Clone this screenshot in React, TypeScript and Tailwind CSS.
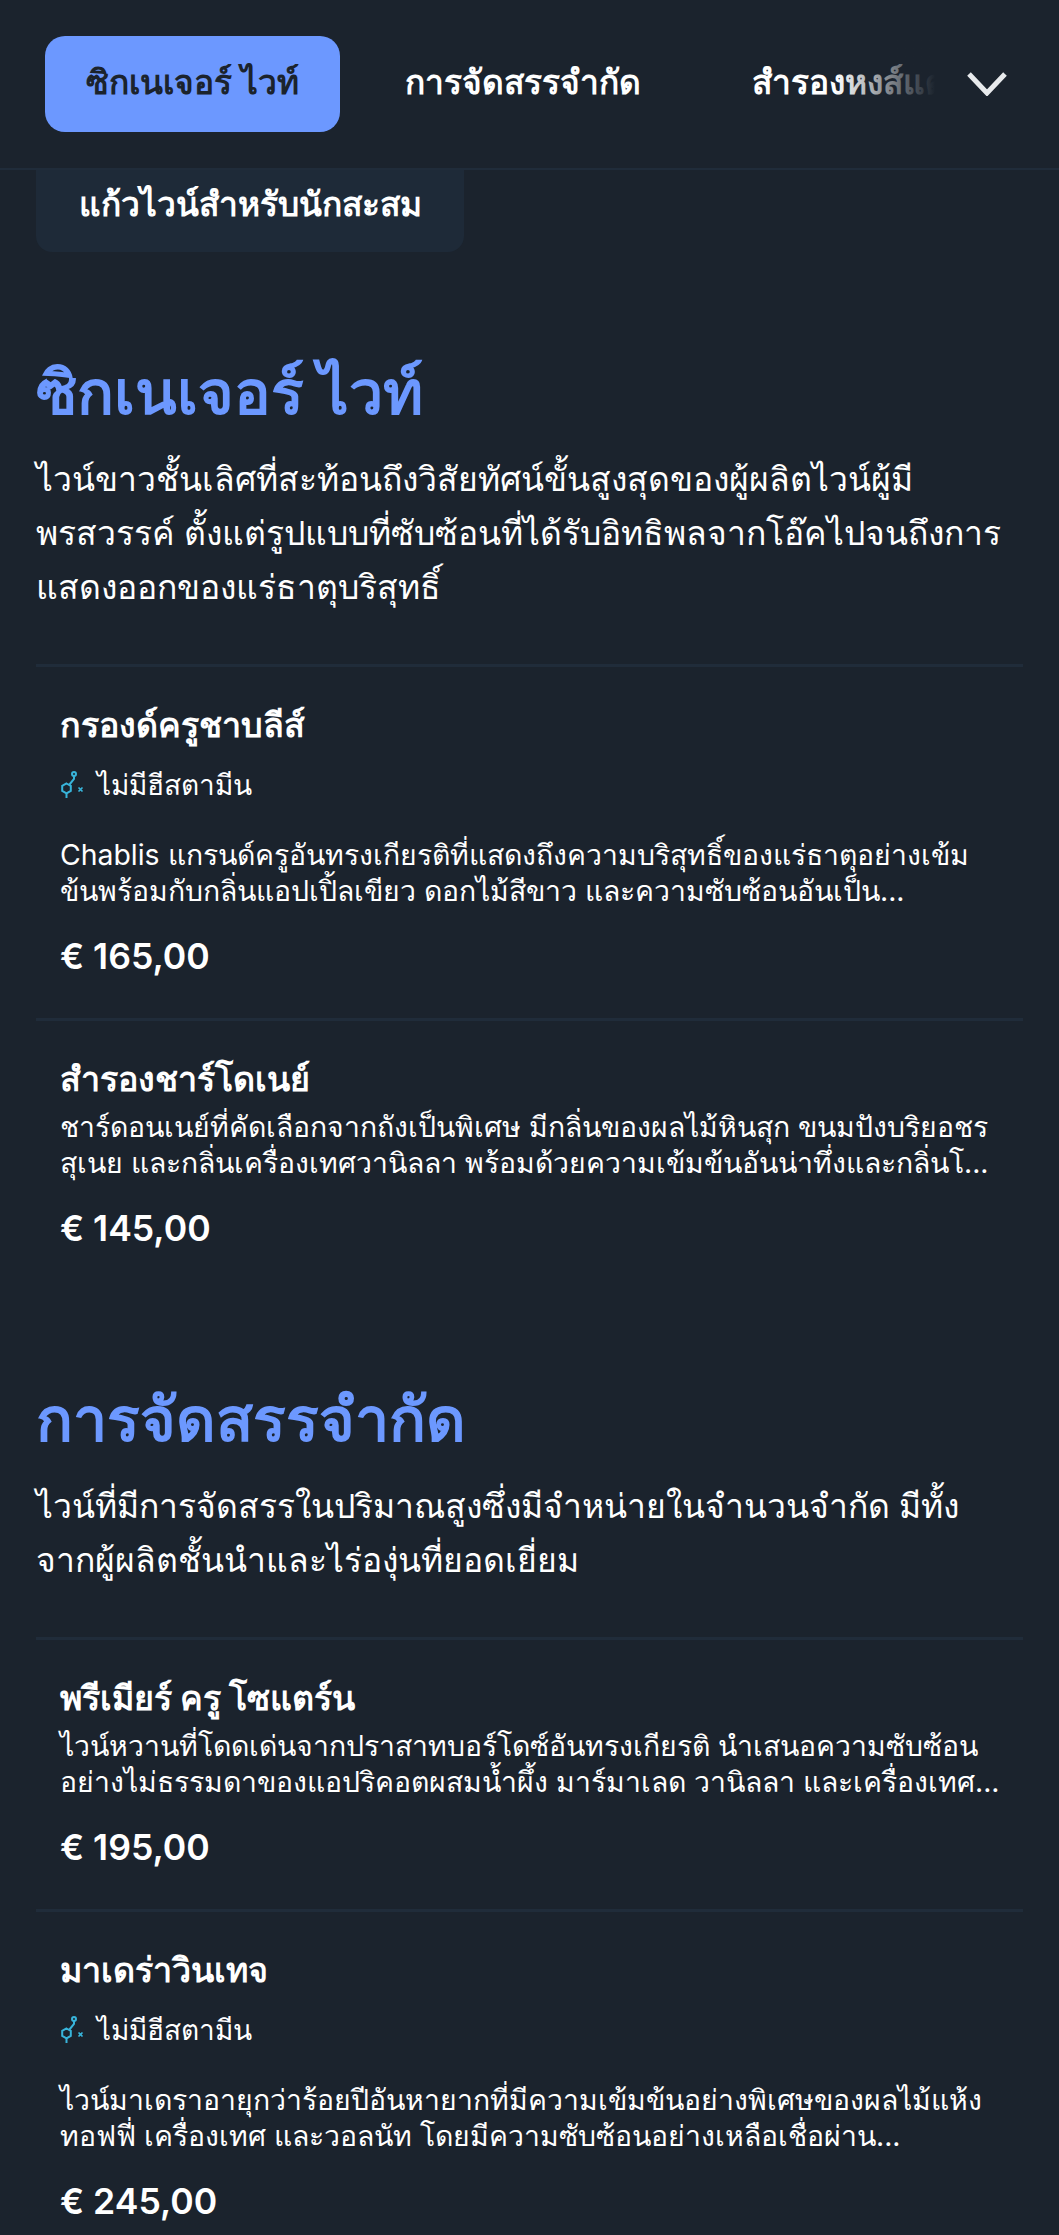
import React from 'react';

type Wine = {
  name: string;
  noHistamine?: boolean;
  lines: string[];
  price: string;
};

const signature: Wine[] = [
  {
    name: 'กรองด์ครูชาบลีส์',
    noHistamine: true,
    lines: [
      'Chablis แกรนด์ครูอันทรงเกียรติที่แสดงถึงความบริสุทธิ์ของแร่ธาตุอย่างเข้ม',
      'ข้นพร้อมกับกลิ่นแอปเปิ้ลเขียว ดอกไม้สีขาว และความซับซ้อนอันเป็น...',
    ],
    price: '€ 165,00',
  },
  {
    name: 'สำรองชาร์โดเนย์',
    lines: [
      'ชาร์ดอนเนย์ที่คัดเลือกจากถังเป็นพิเศษ มีกลิ่นของผลไม้หินสุก ขนมปังบริยอชร',
      'สุเนย และกลิ่นเครื่องเทศวานิลลา พร้อมด้วยความเข้มข้นอันน่าทึ่งและกลิ่นโ...',
    ],
    price: '€ 145,00',
  },
];

const limited: Wine[] = [
  {
    name: 'พรีเมียร์ ครู โซแตร์น',
    lines: [
      'ไวน์หวานที่โดดเด่นจากปราสาทบอร์โดซ์อันทรงเกียรติ นำเสนอความซับซ้อน',
      'อย่างไม่ธรรมดาของแอปริคอตผสมน้ำผึ้ง มาร์มาเลด วานิลลา และเครื่องเทศ...',
    ],
    price: '€ 195,00',
  },
  {
    name: 'มาเดร่าวินเทจ',
    noHistamine: true,
    lines: [
      'ไวน์มาเดราอายุกว่าร้อยปีอันหายากที่มีความเข้มข้นอย่างพิเศษของผลไม้แห้ง',
      'ทอฟฟี่ เครื่องเทศ และวอลนัท โดยมีความซับซ้อนอย่างเหลือเชื่อผ่าน...',
    ],
    price: '€ 245,00',
  },
];

function MoleculeIcon() {
  return (
    <svg width="24" height="28" viewBox="0 0 24 28" fill="none" stroke="#38b4da" strokeWidth="2">
      <path d="M6.5 12.5l4.3 2.4v5l-4.3 2.4-4.3-2.4v-5z" />
      <path d="M6.5 22.3V27M9.5 13.5l4.5-5.5V5" />
      <circle cx="14" cy="3" r="2" />
      <path d="M18.5 16.5l4 4M22.5 16.5l-4 4" strokeWidth="1.7" />
    </svg>
  );
}

function WineItem({ wine }: { wine: Wine }) {
  return (
    <div className="border-t-[3px] border-[#202c3a] pl-6 pb-[39px] pt-[36px] last:pb-0">
      <h3 className="text-[34px] leading-[44px] font-bold">{wine.name}</h3>
      {wine.noHistamine ? (
        <div className="mt-[16px] mb-[30px] flex items-center gap-[13px] text-[28px] leading-[44px]">
          <MoleculeIcon />
          <span>ไม่มีฮีสตามีน</span>
        </div>
      ) : (
        <div className="h-[8px]" />
      )}
      <div className="text-[28.4px] leading-[36px]">
        {wine.lines.map((line) => (
          <p key={line} className="whitespace-nowrap">
            {line}
          </p>
        ))}
      </div>
      <p className="mt-[26px] text-[35.6px] leading-[44px] font-semibold">{wine.price}</p>
    </div>
  );
}

function Section({ title, text, wines }: { title: string; text: string[]; wines: Wine[] }) {
  return (
    <section>
      <h2 className="text-[61px] leading-[80px] font-bold text-[#6c98ff]">{title}</h2>
      <div className="mt-[20px] mb-[50px] text-[33.7px] leading-[54px]">
        {text.map((line) => (
          <p key={line} className="whitespace-nowrap">
            {line}
          </p>
        ))}
      </div>
      {wines.map((wine) => (
        <WineItem key={wine.name} wine={wine} />
      ))}
    </section>
  );
}

export default function App() {
  return (
    <div className="min-h-[2235px] w-[1059px] overflow-hidden bg-[#1b232d] text-white font-['Inter','Noto_Sans',sans-serif]">
      <header className="flex h-[170px] items-center border-b-2 border-[#202c3a] pl-[45px] pr-[52px]">
        <div className="relative flex flex-1 items-center gap-[65px] overflow-hidden text-[33.5px] font-semibold">
          <div className="flex h-[96px] w-[295px] shrink-0 items-center justify-center rounded-[20px] bg-[#6c98ff] pb-[3px] text-[#1b232d]">
            ซิกเนเจอร์ ไวท์
          </div>
          <div className="shrink-0 pb-[3px]">การจัดสรรจำกัด</div>
          <div className="shrink-0 pb-[3px] pl-[46px]">สำรองหงส์แดง</div>
          <div className="absolute inset-y-0 right-0 w-[100px] bg-gradient-to-r from-transparent to-[#1b232d]" />
        </div>
        <svg width="40" height="24" viewBox="0 0 40 24" fill="none" stroke="#e8eaec" strokeWidth="5" className="ml-[32px] shrink-0">
          <path d="M2 2l18 19L38 2" />
        </svg>
      </header>

      <div className="px-[36px]">
        <div className="flex h-[82px] w-[428px] items-start justify-center rounded-b-2xl bg-[#1e2a38] pt-[12px] text-[33.5px] leading-[44px] font-semibold">
          แก้วไวน์สำหรับนักสะสม
        </div>

        <div className="mt-[100px] flex flex-col gap-[128px]">
          <Section
            title="ซิกเนเจอร์ ไวท์"
            text={[
              'ไวน์ขาวชั้นเลิศที่สะท้อนถึงวิสัยทัศน์ขั้นสูงสุดของผู้ผลิตไวน์ผู้มี',
              'พรสวรรค์ ตั้งแต่รูปแบบที่ซับซ้อนที่ได้รับอิทธิพลจากโอ๊คไปจนถึงการ',
              'แสดงออกของแร่ธาตุบริสุทธิ์',
            ]}
            wines={signature}
          />
          <Section
            title="การจัดสรรจำกัด"
            text={[
              'ไวน์ที่มีการจัดสรรในปริมาณสูงซึ่งมีจำหน่ายในจำนวนจำกัด มีทั้ง',
              'จากผู้ผลิตชั้นนำและไร่องุ่นที่ยอดเยี่ยม',
            ]}
            wines={limited}
          />
        </div>
      </div>
    </div>
  );
}
